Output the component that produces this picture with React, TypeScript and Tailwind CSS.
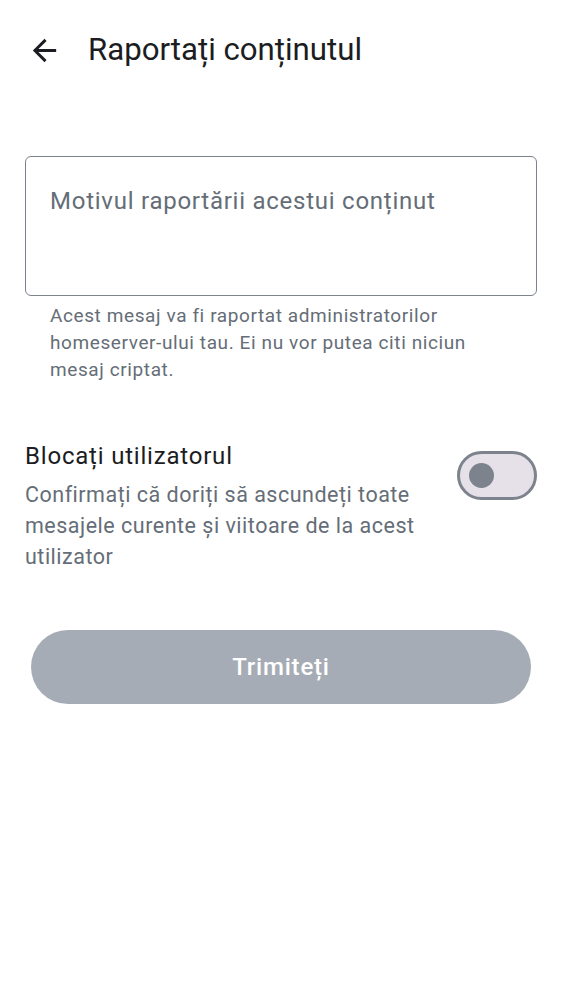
import React from "react";

export default function App() {
  return (
    <div className="w-[562px] h-[1000px] bg-white" style={{ fontFamily: "Roboto, 'Noto Sans', sans-serif" }}>
      <div className="flex items-center h-[100px] pl-[27px]">
        <svg width="35" height="35" viewBox="0 0 24 24" className="text-[#1b1d22]">
          <path d="M20 11H7.83l5.59-5.59L12 4l-8 8 8 8 1.41-1.41L7.83 13H20v-2z" fill="currentColor" />
        </svg>
        <div className="ml-[26px] text-[31.2px] text-[#1b1d22] leading-none">Raportați conținutul</div>
      </div>
      <div className="px-[25px] pt-[56px]">
        <div className="h-[140px] border border-[#7c838d] rounded-[6px] pl-[24px] pt-[28px]">
          <div className="text-[24px] tracking-[0.75px] text-[#656d77] leading-[32px]">Motivul raportării acestui conținut</div>
        </div>
        <div className="pl-[25px] pt-[6px] pr-[50px] text-[19px] leading-[27px] tracking-[0.6px] text-[#656d77]">
          Acest mesaj va fi raportat administratorilor homeserver-ului tau. Ei nu vor putea citi niciun mesaj criptat.
        </div>
        <div className="flex items-start mt-[57px]">
          <div className="flex-1 pr-[20px]">
            <div className="text-[24px] tracking-[0.8px] leading-[32px] text-[#1b1d22]">Blocați utilizatorul</div>
            <div className="text-[21.5px] tracking-[0.5px] leading-[31px] text-[#656d77] mt-[7px]">
              Confirmați că doriți să ascundeți toate mesajele curente și viitoare de la acest utilizator
            </div>
          </div>
          <div className="mt-[11px] w-[80px] h-[49px] rounded-full border-[3px] border-[#7c838d] bg-[#e6e0e9] flex items-center pl-[9px] shrink-0">
            <div className="w-[25px] h-[25px] rounded-full bg-[#7c838d]" />
          </div>
        </div>
        <div className="mt-[58px] mx-[6px] h-[74px] rounded-full bg-[#a6acb5] flex items-center justify-center">
          <span className="text-white text-[24px] tracking-[0.8px] font-medium">Trimiteți</span>
        </div>
      </div>
    </div>
  );
}
